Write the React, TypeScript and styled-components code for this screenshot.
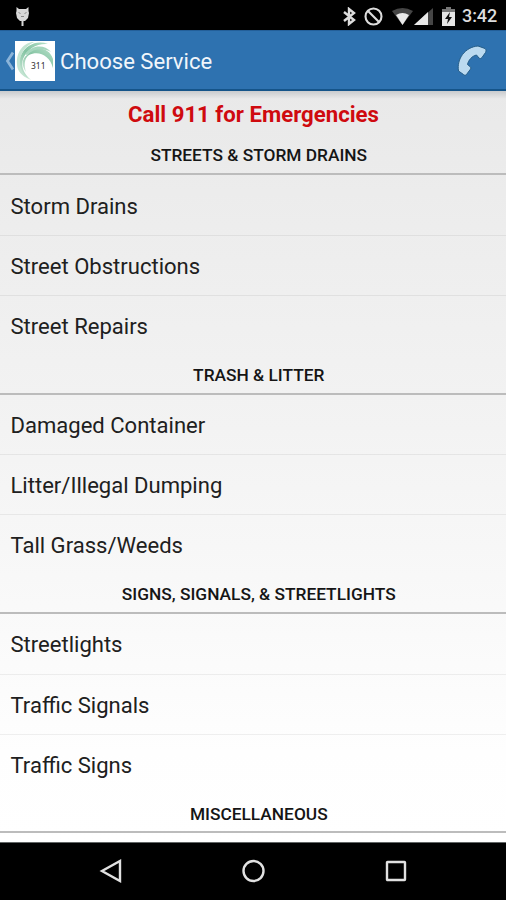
import React from "react";
import styled, { createGlobalStyle } from "styled-components";

const GlobalStyle = createGlobalStyle`
  * { box-sizing: border-box; }
  body { margin: 0; background: #000; font-family: Roboto, "Liberation Sans", sans-serif; }
`;

const Screen = styled.div`
  width: 506px;
  height: 900px;
  display: flex;
  flex-direction: column;
  overflow: hidden;
  background: #000;
`;

const StatusBar = styled.header`
  height: 30px;
  flex: none;
  display: flex;
  align-items: center;
  padding: 2px 9px 0 15px;
  background: #000;
`;

const StatusIcons = styled.div`
  margin-left: auto;
  display: flex;
  align-items: center;
`;

const Clock = styled.span`
  width: 35px;
  margin-left: 7px;
  font-size: 18px;
  font-weight: 500;
  line-height: 28px;
  letter-spacing: -0.1px;
  color: #dcdcdc;
`;

const ActionBar = styled.nav`
  height: 61px;
  flex: none;
  display: flex;
  align-items: center;
  padding: 1px 19px 0 5px;
  background: #2e72b0;
  border-top: 1px solid #235f99;
  border-bottom: 2px solid #155489;
`;

const Title = styled.h1`
  margin: 0 auto 0 5px;
  font-size: 22.1px;
  font-weight: 400;
  line-height: 30px;
  color: #f1f6fb;
`;

const Content = styled.main`
  height: 751px;
  flex: none;
  overflow: hidden;
  background:
    linear-gradient(#c9cbcd, rgba(225, 225, 225, 0) 8px),
    linear-gradient(#e9e9e9, #f3f3f3 45%, #fefefe 88%, #fff);
`;

const Emergency = styled.p`
  margin: 0;
  height: 44.4px;
  padding: 8px 0 0 1px;
  text-align: center;
  font-size: 22.2px;
  font-weight: 700;
  line-height: 30px;
  color: #cf0a0f;
`;

const SectionTitle = styled.h2`
  margin: 0;
  height: 39.8px;
  padding: 9px 0 0 11.5px;
  border-bottom: 2px solid #bcbcbc;
  text-align: center;
  font-size: 17.32px;
  font-weight: 500;
  line-height: 22px;
  color: #151515;
`;

const Services = styled.ul`
  margin: 0;
  padding: 0;
  list-style: none;
`;

const Service = styled.li`
  height: 59.87px;
  padding: 2px 10.5px 0;
  display: flex;
  align-items: center;
  font-size: 22.05px;
  color: #202020;
  & + & { border-top: 1px solid rgba(0, 0, 0, 0.06); }
`;

const NavigationBar = styled.footer`
  flex: 1;
  display: grid;
  grid-template-columns: repeat(3, 142.5px);
  justify-content: center;
  align-items: center;
  justify-items: center;
  padding-bottom: 2px;
  border-top: 1px solid #626666;
`;

const AndroidIcon = () => (
  <svg width="15" height="21" viewBox="0 0 15 21">
    <path d="M1.500 1 4 3h7l2.500-2v4l.5 2-1 5-3 3H8.500v5h-2v-5H5l-3-3-1-5 .5-2V1z" fill="#d8d8d8" />
    <path d="m3.500 6.500 2 1M11.500 6.500l-2 1M6 10.500h3" stroke="#888" />
  </svg>
);

const BluetoothIcon = () => (
  <svg width="13" height="19" viewBox="0 0 13 19" fill="none" stroke="#ddd" strokeWidth="2.4">
    <path d="m1 5 10 8-5 4V2l5 4-10 8" />
  </svg>
);

const BlockedIcon = () => (
  <svg width="19" height="19" viewBox="0 0 19 19" fill="none" stroke="#ddd" strokeWidth="2.1">
    <circle cx="9.5" cy="9.5" r="8" />
    <path d="m4 4 11 11" />
  </svg>
);

const SignalIcons = () => (
  <svg width="42" height="19" viewBox="0 0 42 19">
    <path d="M0 4Q10.500-2 21 4L10.500 18z" fill="#454545" />
    <path d="M4 8q6.500-4 13 0l-6.500 10z" fill="#e9e9e9" />
    <path d="M22 18 41 1v17z" fill="#454545" />
    <path d="M22 18 36 5v13z" fill="#e9e9e9" />
  </svg>
);

const BatteryIcon = () => (
  <svg width="13" height="19" viewBox="0 0 13 19">
    <path d="M4 0h5v2h4v17H0V2h4z" fill="#e5e5e5" />
    <path d="M4 0h5v2h4v3H0V2h4z" fill="#777" />
    <path d="M8 5 3 12h3l-1 5 5-7H7z" fill="#101010" />
  </svg>
);

const BackChevron = () => (
  <svg width="9" height="20" viewBox="0 0 9 20">
    <path d="M8 1.500 2.500 10 8 18.500" fill="none" stroke="#8bb4d9" strokeWidth="2.800" />
  </svg>
);

const LogoMark = styled.svg`
  display: block;
  margin-left: 1px;
  text { font-family: "Noto Sans", sans-serif; font-size: 9.5px; fill: #303030; }
`;

const Logo = () => (
  <LogoMark width="40" height="40" viewBox="0 0 40 40">
    <defs>
      <linearGradient id="swirl" x1="0" y1="1" x2="1" y2="0">
        <stop stopColor="#d3ecdd" />
        <stop offset=".5" stopColor="#83c3a2" />
        <stop offset="1" stopColor="#b6dfc8" />
      </linearGradient>
    </defs>
    <path d="M0 0h40v40H0z" fill="#fff" />
    <path d="M6 14C11 4 22-1 33 3 22 2 12 8 8 18 6 25 8 32 16 39 6 34 1 25 6 14z" fill="url(#swirl)" />
    <path d="M2 23C1 11 9 1 19 1 10 5 5 13 5 21c0 8 4 13 9 17C7 35 2 30 2 23z" fill="#c2e4d1" />
    <path d="M12 14C20 4 34 6 38 18v9C35 15 24 9 14 14c-5 4-5 10-3 17-5-7-4-13 1-17z" fill="url(#swirl)" />
    <path d="M10 13C17 4 29 3 36 11 29 7 19 7 12 14z" fill="#a6d6bd" />
    <text x="16" y="28" textLength="14.500" lengthAdjust="spacingAndGlyphs">311</text>
  </LogoMark>
);

const PhoneIcon = () => (
  <svg width="30" height="31" viewBox="0 0 30 31">
    <path
      d="M1.500 26C-.5 14 8 2 21 1l7 2.500c1 1 1.500 2 .5 4L25 12.500c-1 1-2 1.500-3 .5l-2.500-3C15 11 11.500 15 10.500 19.500l2.500 2c1 1 1 2 .2 3L9.500 29.500c-1 1-2 1-3 0z"
      fill="#bbdaf0"
      stroke="#245c87"
      strokeWidth="1"
    />
  </svg>
);

const NavIcon = styled.svg`
  width: 24px;
  height: 24px;
  fill: none;
  stroke: #e1e1e1;
  stroke-width: 2.4;
`;

const StatusGroup = styled.div`
  display: grid;
  grid-template-columns: 13px 19px 42px 13px;
  column-gap: 8.5px;
  align-items: center;
`;

const sections = [
  { title: "STREETS & STORM DRAINS", services: ["Storm Drains", "Street Obstructions", "Street Repairs"] },
  { title: "TRASH & LITTER", services: ["Damaged Container", "Litter/Illegal Dumping", "Tall Grass/Weeds"] },
  { title: "SIGNS, SIGNALS, & STREETLIGHTS", services: ["Streetlights", "Traffic Signals", "Traffic Signs"] },
  { title: "MISCELLANEOUS", services: [] },
];

export default function App() {
  return (
    <Screen>
      <GlobalStyle />
      <StatusBar>
        <AndroidIcon />
        <StatusIcons>
          <StatusGroup>
            <BluetoothIcon />
            <BlockedIcon />
            <SignalIcons />
            <BatteryIcon />
          </StatusGroup>
          <Clock>3:42</Clock>
        </StatusIcons>
      </StatusBar>
      <ActionBar>
        <BackChevron />
        <Logo />
        <Title>Choose Service</Title>
        <PhoneIcon />
      </ActionBar>
      <Content>
        <Emergency>Call 911 for Emergencies</Emergency>
        {sections.map(({ title, services }) => (
          <section key={title}>
            <SectionTitle>{title}</SectionTitle>
            <Services>
              {services.map((service) => <Service key={service}>{service}</Service>)}
            </Services>
          </section>
        ))}
      </Content>
      <NavigationBar>
        <NavIcon viewBox="0 0 24 24"><path d="M21 2v20L3 12z" /></NavIcon>
        <NavIcon viewBox="0 0 24 24"><circle cx="12.500" cy="12" r="10" /></NavIcon>
        <NavIcon viewBox="0 0 24 24"><rect x="3" y="3" width="18" height="18" rx="0.500" /></NavIcon>
      </NavigationBar>
    </Screen>
  );
}
